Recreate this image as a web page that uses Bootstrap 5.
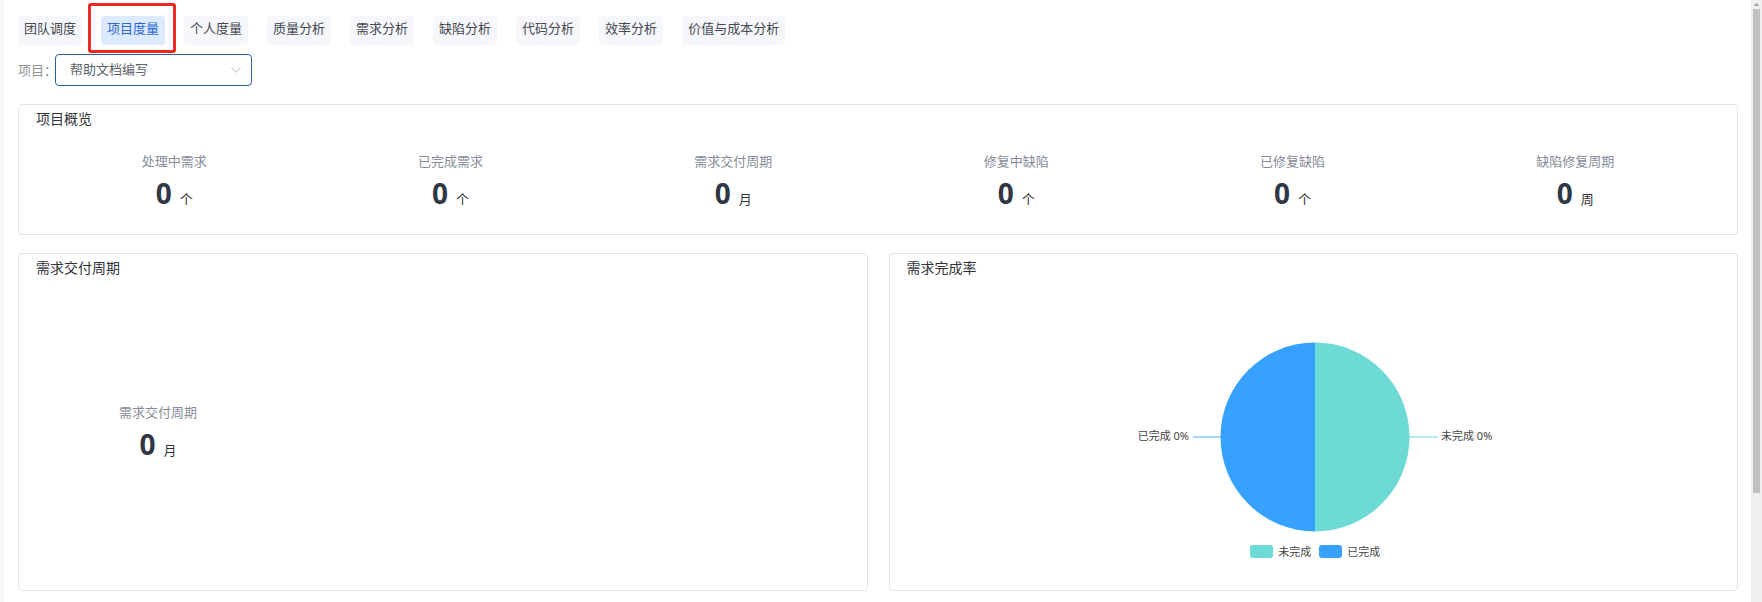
<!DOCTYPE html>
<html lang="zh-CN">
<head>
<meta charset="utf-8">
<meta name="viewport" content="width=device-width, initial-scale=1">
<title>项目度量</title>
<link href="https://cdn.jsdelivr.net/npm/bootstrap@5.3.0/dist/css/bootstrap.min.css" rel="stylesheet">
<style>
  body { font-family: "Noto Sans CJK SC", sans-serif; font-size: 13px; line-height: 20px; color: #303133; background: #fff; }
  .edge-strip { width: 4px; background: #f7f7f5; }
  .page-main { padding: 16px 13px 10px 14px; min-width: 0; }
  .metric-tabs { gap: 8px 19px; }
  .metric-tab { border: 0; border-radius: 4px; padding: 2px 6px 7px; background: #f5f7fb; color: #46494f; position: relative; }
  .metric-tab.active { background: #dbeafe; color: #2b66d4; }
  .metric-tab.active::after { content: ""; position: absolute; inset: -13px -11px -8px -13px; border: 3px solid #ea2a22; border-radius: 3px; pointer-events: none; }
  .filter-row { margin: 9px 0 18px; }
  .filter-label { width: 37px; white-space: nowrap; color: #8f9298; }
  .project-select { width: 197px; height: 32px; padding: 0 40px 2px 14px; border: 1px solid #2a5fa0; border-radius: 4px; background: #fff; color: #5c5f66; appearance: none; }
  .select-arrow { right: 10px; top: 10px; pointer-events: none; }
  .panel { border: 1px solid #e4e4e6; border-radius: 4px; background: #fff; padding: 3px 17px 0; }
  .panel-title { font-size: 14px; line-height: 20px; margin: 0; font-weight: 400; color: #303338; }
  .overview { height: 131px; margin-bottom: 18px; }
  .chart-panel { height: 338px; }
  .charts { gap: 21px; }
  .stat-label { color: #868c98; }
  .stat-line { gap: 8px; margin-top: 6px; line-height: 32px; }
  .stat-num { font-family: "Noto Sans", sans-serif; font-size: 28px; font-weight: 700; color: #303846; }
  .overview-stats { margin-top: 23px; }
  .cycle-stat { width: 30%; margin-top: 125px; }
  .pie-area { margin-top: 65px; padding-left: 4px; }
  .pie-area text { font-family: "Noto Sans", "Noto Sans CJK SC", sans-serif; font-size: 11px; fill: #444; }
  .legend-list { gap: 8px; margin-top: 9px; font-size: 11px; color: #444; }
  .legend-key { gap: 5px; }
  .swatch { width: 23px; height: 13px; border-radius: 3px; }
  .rail { width: 11px; background: #f0f0f0; padding: 3px 2px 0; }
  .rail-thumb { width: 7px; height: 484px; margin-top: 3px; background: #c1c1c1; }
</style>
</head>
<body>
<div class="d-flex min-vh-100">
  <div class="edge-strip flex-shrink-0"></div>
  <main class="page-main flex-grow-1">
    <nav class="metric-tabs d-flex flex-wrap" aria-label="度量">
      <button type="button" class="metric-tab">团队调度</button>
      <button type="button" class="metric-tab active" aria-current="page">项目度量</button>
      <button type="button" class="metric-tab">个人度量</button>
      <button type="button" class="metric-tab">质量分析</button>
      <button type="button" class="metric-tab">需求分析</button>
      <button type="button" class="metric-tab">缺陷分析</button>
      <button type="button" class="metric-tab">代码分析</button>
      <button type="button" class="metric-tab">效率分析</button>
      <button type="button" class="metric-tab">价值与成本分析</button>
    </nav>

    <div class="filter-row d-flex align-items-center">
      <label class="filter-label" for="project">项目：</label>
      <div class="position-relative">
        <select id="project" class="project-select"><option>帮助文档编写</option></select>
        <svg class="select-arrow position-absolute" width="12" height="12" viewBox="0 0 12 12" fill="none" stroke="#b4b8bf" aria-hidden="true"><path d="M1.500 3.800 6 8.300l4.500-4.500"/></svg>
      </div>
    </div>

    <section class="panel overview">
      <h2 class="panel-title">项目概览</h2>
      <div class="overview-stats d-flex justify-content-around text-center">
        <div><div class="stat-label">处理中需求</div><div class="stat-line d-flex justify-content-center align-items-baseline"><span class="stat-num">0</span><span>个</span></div></div>
        <div><div class="stat-label">已完成需求</div><div class="stat-line d-flex justify-content-center align-items-baseline"><span class="stat-num">0</span><span>个</span></div></div>
        <div><div class="stat-label">需求交付周期</div><div class="stat-line d-flex justify-content-center align-items-baseline"><span class="stat-num">0</span><span>月</span></div></div>
        <div><div class="stat-label">修复中缺陷</div><div class="stat-line d-flex justify-content-center align-items-baseline"><span class="stat-num">0</span><span>个</span></div></div>
        <div><div class="stat-label">已修复缺陷</div><div class="stat-line d-flex justify-content-center align-items-baseline"><span class="stat-num">0</span><span>个</span></div></div>
        <div><div class="stat-label">缺陷修复周期</div><div class="stat-line d-flex justify-content-center align-items-baseline"><span class="stat-num">0</span><span>周</span></div></div>
      </div>
    </section>

    <div class="charts d-flex">
      <section class="panel chart-panel flex-fill w-50">
        <h2 class="panel-title">需求交付周期</h2>
        <div class="cycle-stat text-center">
          <div class="stat-label">需求交付周期</div>
          <div class="stat-line d-flex justify-content-center align-items-baseline"><span class="stat-num">0</span><span>月</span></div>
        </div>
      </section>
      <section class="panel chart-panel flex-fill w-50">
        <h2 class="panel-title">需求完成率</h2>
        <div class="pie-area">
          <svg class="d-block mx-auto" width="360" height="190" viewBox="0 0 360 190" role="img" aria-label="需求完成率">
            <path d="M180 .5a94.500 94.500 0 0 1 0 189z" fill="#6edad5"/>
            <path d="M180 .5a94.500 94.500 0 0 0 0 189z" fill="#36a1ff"/>
            <path d="M58 95h28" stroke="#36a1ff" stroke-opacity=".6" stroke-width="1.500"/>
            <path d="M274 95h29" stroke="#6edad5" stroke-opacity=".7" stroke-width="1.500"/>
            <text x="54" y="98" text-anchor="end">已完成 0%</text>
            <text x="306" y="98">未完成 0%</text>
          </svg>
          <div class="legend-list d-flex justify-content-center">
            <div class="legend-key d-flex align-items-center"><span class="swatch" style="background:#6edad5"></span><span>未完成</span></div>
            <div class="legend-key d-flex align-items-center"><span class="swatch" style="background:#36a1ff"></span><span>已完成</span></div>
          </div>
        </div>
      </section>
    </div>
  </main>
  <div class="rail flex-shrink-0" aria-hidden="true">
    <svg class="d-block mx-auto" width="5" height="3" viewBox="0 0 5 3"><path d="M0 3V2h1V1h1V0h1v1h1v1h1v1z" fill="#a3a3a3"/></svg>
    <div class="rail-thumb"></div>
  </div>
</div>
<script src="https://cdn.jsdelivr.net/npm/bootstrap@5.3.0/dist/js/bootstrap.bundle.min.js"></script>
</body>
</html>
